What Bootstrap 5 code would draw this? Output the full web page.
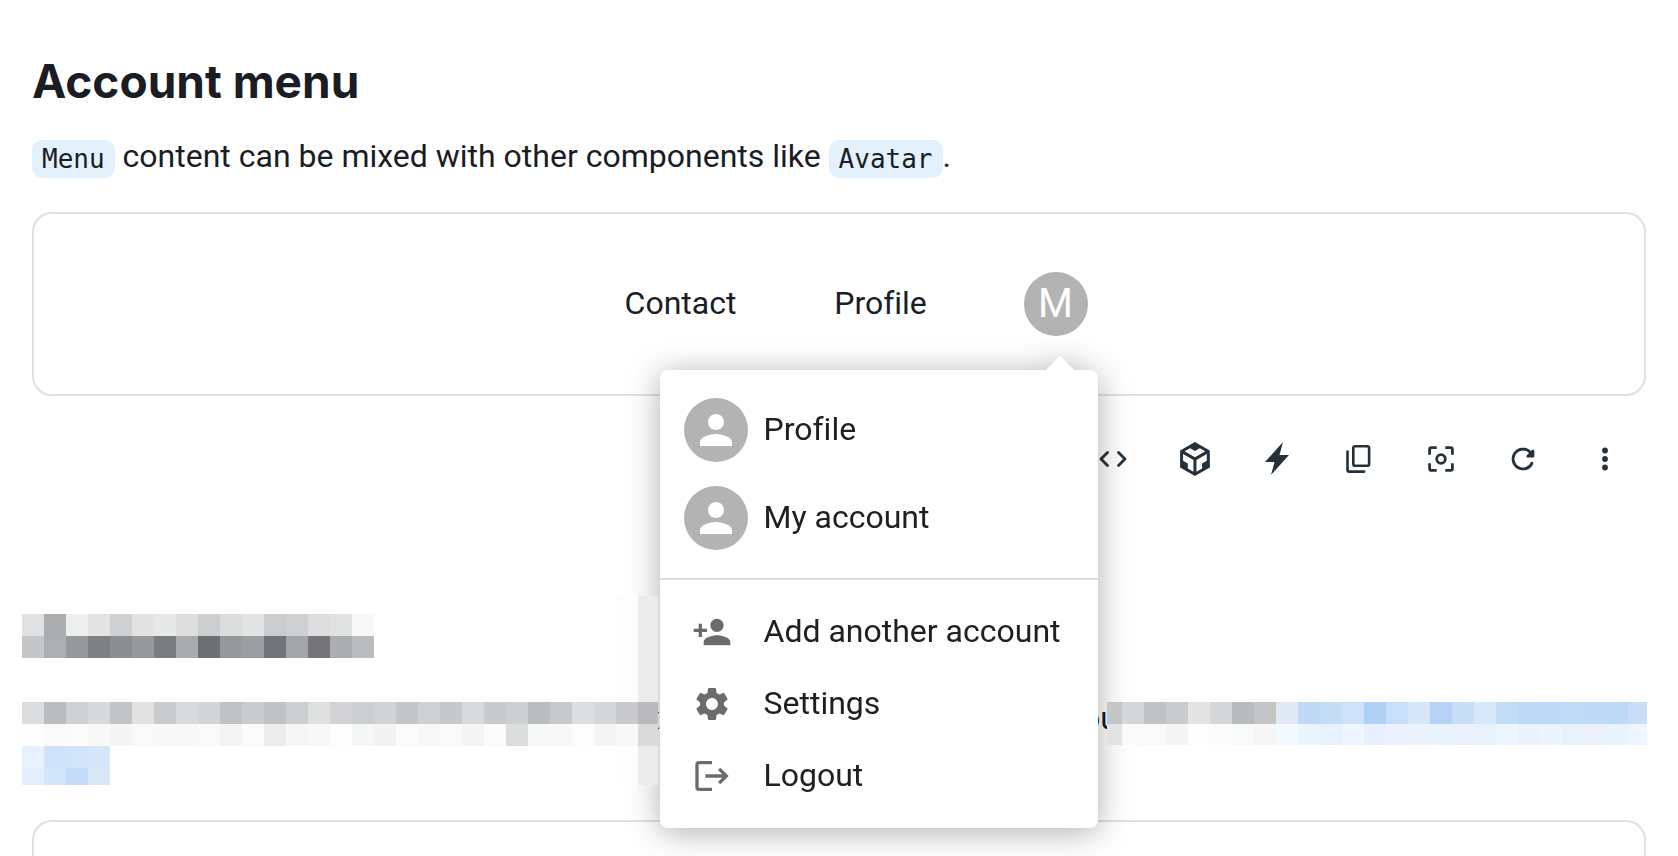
<!DOCTYPE html>
<html lang="en">
<head>
<meta charset="utf-8">
<meta name="viewport" content="width=device-width, initial-scale=1">
<title>Account menu</title>
<link href="https://cdn.jsdelivr.net/npm/bootstrap@5.3.0/dist/css/bootstrap.min.css" rel="stylesheet">
<style>
  body { font-family: Roboto, "Liberation Sans", sans-serif; font-size: 32px; line-height: 48px; font-variant-ligatures: none; color: #1a1d24; background: #fff; }
  .doc-head { padding: 51px 32px 0; }
  .doc-title { font-family: Inter, "Liberation Sans", sans-serif; font-size: 46px; line-height: 60px; font-weight: 700; margin-bottom: 21px; }
  .doc-text { margin-bottom: 32px; }
  .chip-code { font-family: "DejaVu Sans Mono", monospace; font-size: 26px; line-height: 38px; color: #1a1d24; background: #e3f1fd; border-radius: 10px; padding: 0 10px; display: inline-block; vertical-align: middle; }
  .demo { border: 2px solid #e0e0e0; border-radius: 20px; margin: 0 32px; }
  .demo-bar { height: 180px; }
  .demo-link { color: inherit; text-decoration: none; width: 200px; padding-bottom: 2px; text-align: center; }
  .account { margin: 0 10px 0 43px; }
  .round { width: 64px; height: 64px; border-radius: 50%; background: #b3b3b3; color: #fff; border: 0; padding: 0; font-size: 40px; line-height: 64px; }
  .account-menu { top: 98px; right: -10px; width: 438px; padding: 16px 0; border: 0; border-radius: 8px; background: #fff; font-size: 32px; color: #202020; z-index: 2; filter: drop-shadow(0 4px 16px rgba(0, 0, 0, .32)); }
  .account-menu::before { content: ""; position: absolute; top: -10px; right: 28px; width: 20px; height: 20px; background: #fff; transform: rotate(45deg); }
  .account-menu .dropdown-item { color: inherit; line-height: 48px; padding: 12px 24px; }
  .account-menu .dropdown-item .round { margin-right: 16px; }
  .account-menu .item-label { margin: -2px 0 0; }
  .account-menu .glyph { margin: 0 32px 0 8px; color: #6b6b6b; }
  .account-menu .dropdown-item:has(.glyph) { height: 72px; }
  .account-menu .dropdown-divider { margin: 16px 0; border-top: 2px solid #dcdcdc; opacity: 1; }
  .tools { padding: 43px 53px 0; gap: 42px; color: #24303a; }
  .tools button { border: 0; padding: 0; background: none; color: inherit; width: 40px; height: 40px; line-height: 0; }
  .redacted { margin: 135px 31px 0 22px; }
  .tiles { display: block; flex: none; position: relative; z-index: 3; }
  .redacted-line { margin-top: 44px; }
  .shade { top: -106px; right: 0; width: 42px; height: 189px; background: linear-gradient(90deg, #fdfdfd 22px, #ebebeb 22px); z-index: 3; }
  .peek { height: 44px; line-height: 32px; }
  .peek-start { margin-left: -14px; }
  .peek-end { margin-right: -11px; }
  .demo-next { margin-top: 35px; border-bottom: 0; border-radius: 20px 20px 0 0; }
</style>
</head>
<body>
<main class="d-flex flex-column min-vh-100">
  <header class="doc-head">
    <h1 class="doc-title">Account menu</h1>
    <p class="doc-text"><code class="chip-code">Menu</code> content can be mixed with other components like <code class="chip-code">Avatar</code>.</p>
  </header>

  <section class="demo">
    <nav class="demo-bar d-flex align-items-center justify-content-center">
      <a class="demo-link" href="#contact">Contact</a>
      <a class="demo-link" href="#profile">Profile</a>
      <div class="account position-relative">
        <button class="round d-block" type="button" aria-label="Account" aria-expanded="true">M</button>
        <div class="dropdown-menu show account-menu">
          <a class="dropdown-item d-flex align-items-center" href="#profile"><span class="round d-flex align-items-center justify-content-center"><svg width="48" height="48" viewBox="0 0 24 24" fill="currentColor"><path d="M12 12c2.21 0 4-1.79 4-4s-1.79-4-4-4-4 1.79-4 4 1.79 4 4 4zm0 2c-2.67 0-8 1.34-8 4v2h16v-2c0-2.66-5.33-4-8-4z"/></svg></span><span class="item-label">Profile</span></a>
          <a class="dropdown-item d-flex align-items-center" href="#account"><span class="round d-flex align-items-center justify-content-center"><svg width="48" height="48" viewBox="0 0 24 24" fill="currentColor"><path d="M12 12c2.21 0 4-1.79 4-4s-1.79-4-4-4-4 1.79-4 4 1.79 4 4 4zm0 2c-2.67 0-8 1.34-8 4v2h16v-2c0-2.66-5.33-4-8-4z"/></svg></span><span class="item-label">My account</span></a>
          <hr class="dropdown-divider">
          <a class="dropdown-item d-flex align-items-center" href="#add"><svg class="glyph" width="40" height="40" viewBox="0 0 24 24" fill="currentColor"><path d="M15 12c2.21 0 4-1.79 4-4s-1.79-4-4-4-4 1.79-4 4 1.79 4 4 4zm-9-2V7H4v3H1v2h3v3h2v-3h3v-2H6zm9 4c-2.67 0-8 1.34-8 4v2h16v-2c0-2.66-5.33-4-8-4z"/></svg><span class="item-label">Add another account</span></a>
          <a class="dropdown-item d-flex align-items-center" href="#settings"><svg class="glyph" width="40" height="40" viewBox="0 0 24 24" fill="currentColor"><path d="M19.14 12.94c.04-.3.06-.61.06-.94 0-.32-.02-.64-.07-.94l2.03-1.58c.18-.14.23-.41.12-.61l-1.92-3.32c-.12-.22-.37-.29-.59-.22l-2.39.96c-.5-.38-1.03-.7-1.62-.94l-.36-2.54c-.04-.24-.24-.41-.48-.41h-3.84c-.24 0-.43.17-.47.41l-.36 2.54c-.59.24-1.13.57-1.62.94l-2.39-.96c-.22-.08-.47 0-.59.22L2.74 8.87c-.12.21-.08.47.12.61l2.03 1.58c-.05.3-.09.63-.09.94s.02.64.07.94l-2.03 1.58c-.18.14-.23.41-.12.61l1.92 3.32c.12.22.37.29.59.22l2.39-.96c.5.38 1.03.7 1.62.94l.36 2.54c.05.24.24.41.48.41h3.84c.24 0 .44-.17.47-.41l.36-2.54c.59-.24 1.13-.56 1.62-.94l2.39.96c.22.08.47 0 .59-.22l1.92-3.32c.12-.22.07-.47-.12-.61l-2.01-1.58zM12 15.6c-1.98 0-3.6-1.62-3.6-3.6s1.62-3.6 3.6-3.6 3.6 1.62 3.6 3.6-1.62 3.6-3.6 3.6z"/></svg><span class="item-label">Settings</span></a>
          <a class="dropdown-item d-flex align-items-center" href="#logout"><svg class="glyph" width="40" height="40" viewBox="0 0 24 24" fill="currentColor"><path d="m17 7-1.41 1.41L18.17 11H8v2h10.17l-2.58 2.58L17 17l5-5zM4 5h8V3H4c-1.1 0-2 .9-2 2v14c0 1.1.9 2 2 2h8v-2H4V5z"/></svg><span class="item-label">Logout</span></a>
        </div>
      </div>
    </nav>
  </section>

  <div class="tools d-flex justify-content-end">
    <button type="button" aria-label="Show code"><svg width="40" height="40" viewBox="0 0 40 40" fill="none" stroke="currentColor" stroke-width="2.8" stroke-linecap="round" stroke-linejoin="round"><path d="M14.500 13.500 8 20l6.500 6.500M25.500 13.500 32 20l-6.500 6.500"/></svg></button>
    <button type="button" aria-label="Open in CodeSandbox"><svg width="40" height="40" viewBox="-1.600 -2.100 28.200 28.200" fill="currentColor"><path fill-rule="evenodd" d="M2 6l10.455-6L22.910 6 23 17.950 12.455 24 2 18V6zm2.088 2.481v4.757l3.345 1.860v3.516l3.972 2.296v-8.272L4.088 8.481zm16.739 0l-7.317 4.157v8.272l3.972-2.296V15.100l3.345-1.861V8.480zM5.134 6.601l7.303 4.144 7.320-4.180-3.871-2.197-3.410 1.945-3.430-1.968L5.133 6.600z"/></svg></button>
    <button type="button" aria-label="Open in StackBlitz"><svg width="40" height="40" viewBox="0 0 40 40" fill="currentColor"><path d="M26 3 8 23h9.500L14 36 32 16h-9.500z"/></svg></button>
    <button type="button" aria-label="Copy"><svg width="40" height="40" viewBox="0 0 40 40" fill="none" stroke="currentColor" stroke-width="2.6" stroke-linecap="round"><rect x="14.300" y="7.200" width="15.800" height="19.600" rx="1.800"/><path d="M8.500 12.500v18.400q0 1.700 1.700 1.700h15"/></svg></button>
    <button type="button" aria-label="Focus"><svg width="40" height="40" viewBox="0 0 40 40" fill="none" stroke="currentColor" stroke-width="2.800"><path d="M15.700 8.600H10.400q-1.800 0-1.800 1.800v5.300M24.300 8.600h5.300q1.800 0 1.800 1.800v5.300M15.700 31.400H10.400q-1.800 0-1.800-1.800v-5.300M24.300 31.400h5.300q1.800 0 1.800-1.800v-5.300"/><circle cx="20" cy="20" r="4.300"/></svg></button>
    <button type="button" aria-label="Reset"><svg width="40" height="40" viewBox="-2.100 -2.100 28.200 28.200" fill="currentColor"><path d="M17.650 6.350c-1.630-1.630-3.940-2.570-6.480-2.310-3.670.37-6.690 3.350-7.100 7.020C3.520 15.910 7.270 20 12 20c3.190 0 5.930-1.870 7.210-4.560.32-.67-.16-1.440-.9-1.440-.37 0-.72.2-.88.53-1.130 2.430-3.840 3.970-6.800 3.310-2.220-.49-4.010-2.300-4.480-4.520C5.310 9.440 8.260 6 12 6c1.660 0 3.140.69 4.220 1.780l-1.510 1.510c-.63.63-.19 1.710.7 1.710H19c.55 0 1-.45 1-1V6.410c0-.89-1.080-1.340-1.710-.71l-.64.65z"/></svg></button>
    <button type="button" aria-label="More"><svg width="40" height="40" viewBox="0 0 40 40" fill="currentColor"><circle cx="20" cy="11.500" r="2.900"/><circle cx="20" cy="20" r="2.900"/><circle cx="20" cy="28.500" r="2.900"/></svg></button>
  </div>

  <section class="redacted">
    <svg class="tiles" width="352" height="44" data-rows="e0e1e3 acadae eef0ef e4e4e4 cfd0d2 e2e2e2 e6e9e8 dededf cdced0 dbdddc e3e5e4 cbccce cfd0d2 dddee0 e0e2e1 f8f8f8|c5c6c8 adaeaf 98999a 7f8083 8a8f92 98999b 787d80 aaabac 6b7073 97989c 9d9ea2 71737a a4a5a7 757579 acadae bbbcbe"></svg>
    <div class="redacted-line d-flex">
      <div class="position-relative flex-shrink-0">
        <div class="shade position-absolute"></div>
        <svg class="tiles" width="636" height="44" data-rows="dbdcde bbbcbd d0d1d3 d8d9db c3c4c6 e2e2e2 cacbcd d9dadb d3d4d5 c0c1c3 cacbcd c1c2c4 cdced0 dfe1e0 d3d3d5 cdced0 d1d2d3 c5c6c8 ced0d2 c7c8ca d9dadb c9cacc cecfd1 bbbcbe c8c9cb dddee0 d6d7d8 c9cacc bababc|fdfdfd f9f9f9 fbfbfb f8f8f8 f5f5f5 f9f9f9 f8f8f8 f8f8f8 fafafa f4f4f4 fafcfb ececec f6f6f6 f8f8f8 fdfdfd f5f7f6 f3f3f3 fbfbfb f8f8f8 fafafa f4f4f4 fbfbfb dadddc f6f9f8 f8f8f8 fdfdfd f5f5f5 f8f8f8 dadada"></svg>
      </div>
      <div class="peek d-flex flex-fill justify-content-between overflow-hidden"><span class="peek-start">x</span><span class="peek-end">you</span></div>
      <svg class="tiles" width="540" height="43" viewBox="7 0 540 43" data-rows="c5c6c8 d5d6d8 c1c2c4 cacbcd e4e4e5 d6d7d9 babbbd c4c5c6 dfeaf6 bfdaf6 c5dcf7 cfe2f9 afd1f5 c9def8 d8e6f9 b4d3f7 c8ddf6 d9e8f8 c2ddf5 bdd9f6 bfdaf8 c0dbf6 bfd9f7 bcd9f6 c8def7|e1e4e3 fafafa f9f9f9 f5f5f5 fdfdfd fbfbfb f8faf9 f6f6f6 f3faff ebf5fe eaf1fe eef6ff e6f1fd ebf1fe ebf1fd e8f3fd eaf0fd e8f2fd edf6ff eaf2fd ecf5fe e8f2fd eaf1fd e7f3fd edf6ff"></svg>
    </div>
    <svg class="tiles" width="88" height="39" data-rows="e8f1fc cfe2f9 d2e4fa d4e6f8|e3eefc d2e6fb c4dcf7 dae8f6"></svg>
  </section>

  <section class="demo demo-next flex-fill"></section>
</main>
<script src="https://cdn.jsdelivr.net/npm/bootstrap@5.3.0/dist/js/bootstrap.bundle.min.js"></script>
<script>
  // Fill each tile strip with 22px squares, one colour per square.
  document.querySelectorAll('.tiles').forEach(function (svg) {
    svg.dataset.rows.split('|').forEach(function (row, y) {
      row.split(' ').forEach(function (colour, x) {
        var r = document.createElementNS('http://www.w3.org/2000/svg', 'rect');
        r.setAttribute('x', x * 22); r.setAttribute('y', y * 22);
        r.setAttribute('width', 22); r.setAttribute('height', 22);
        r.setAttribute('fill', '#' + colour);
        svg.appendChild(r);
      });
    });
  });
</script>
</body>
</html>
